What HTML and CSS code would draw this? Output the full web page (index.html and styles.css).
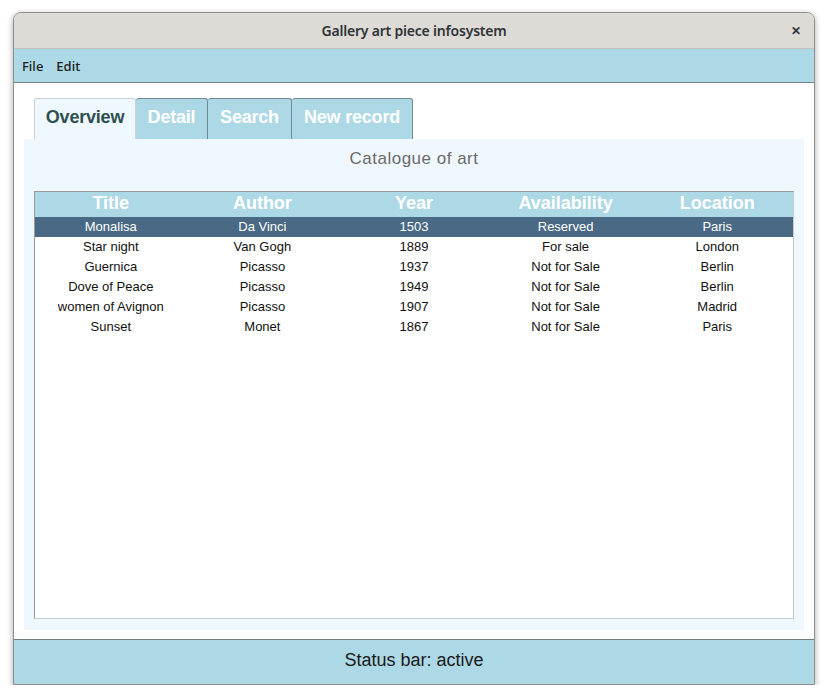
FILE: index.html
```html
<!DOCTYPE html>
<html>
<head>
<meta charset="utf-8">
<link rel="stylesheet" href="styles.css">
</head>
<body>
<div class="window">
  <div class="titlebar">
    <span class="title">Gallery art piece infosystem</span>
    <span class="close">&#x2715;</span>
  </div>
  <div class="menubar">
    <span class="menu-item">File</span>
    <span class="menu-item">Edit</span>
  </div>
  <div class="content">
    <div class="tabs">
      <div class="tab active">Overview</div>
      <div class="tab">Detail</div>
      <div class="tab">Search</div>
      <div class="tab">New record</div>
    </div>
    <div class="panel">
      <div class="panel-title">Catalogue of art</div>
      <div class="table-box">
        <table class="grid">
          <thead>
            <tr><th>Title</th><th>Author</th><th>Year</th><th>Availability</th><th>Location</th></tr>
          </thead>
          <tbody>
            <tr class="selected"><td>Monalisa</td><td>Da Vinci</td><td>1503</td><td>Reserved</td><td>Paris</td></tr>
            <tr><td>Star night</td><td>Van Gogh</td><td>1889</td><td>For sale</td><td>London</td></tr>
            <tr><td>Guernica</td><td>Picasso</td><td>1937</td><td>Not for Sale</td><td>Berlin</td></tr>
            <tr><td>Dove of Peace</td><td>Picasso</td><td>1949</td><td>Not for Sale</td><td>Berlin</td></tr>
            <tr><td>women of Avignon</td><td>Picasso</td><td>1907</td><td>Not for Sale</td><td>Madrid</td></tr>
            <tr><td>Sunset</td><td>Monet</td><td>1867</td><td>Not for Sale</td><td>Paris</td></tr>
          </tbody>
        </table>
      </div>
    </div>
  </div>
  <div class="statusbar">Status bar: active</div>
</div>
</body>
</html>
```
FILE: styles.css
```css
html, body {
  margin: 0;
  padding: 0;
  background: #ffffff;
}
body {
  padding: 12px 13px 0 13px;
  font-family: "Liberation Sans", Arial, sans-serif;
}
.window {
  width: 802px;
  height: 673px;
  box-sizing: border-box;
  border: 1px solid #8f8f8f;
  border-radius: 8px 8px 0 0;
  display: flex;
  flex-direction: column;
  box-shadow: 0 2px 6px rgba(0,0,0,0.35);
  overflow: hidden;
  background: #ffffff;
}
.titlebar {
  height: 35px;
  background: #dedad6;
  border-bottom: 1px solid #c6c2be;
  display: flex;
  align-items: center;
  justify-content: center;
  position: relative;
  font-family: "Noto Sans", sans-serif;
  color: #2e3436;
}
.title {
  font-size: 14px;
  font-weight: 600;
  letter-spacing: -0.2px;
}
.close {
  position: absolute;
  right: 13px;
  top: 9px;
  font-size: 12px;
  font-weight: 700;
}
.menubar {
  height: 33px;
  background: #add8e6;
  border-bottom: 1px solid #6e8088;
  display: flex;
  align-items: center;
  padding-left: 8px;
  gap: 13px;
  font-family: "Noto Sans", sans-serif;
  font-size: 13px;
  font-weight: 500;
  color: #1d1d1d;
}
.content {
  flex: 1;
  padding: 15px 10px 9px 10px;
  display: flex;
  flex-direction: column;
}
.tabs {
  display: flex;
  margin-left: 10px;
  height: 41px;
}
.tab {
  box-sizing: border-box;
  height: 41px;
  padding: 0 0 3px 0;
  display: flex;
  align-items: center;
  justify-content: center;
  white-space: nowrap;
  font-size: 18px;
  font-weight: 700;
  letter-spacing: -0.2px;
  color: #ffffff;
  background: #add8e6;
  border: 1px solid #6f8a91;
  border-bottom: none;
  border-left: none;
  border-radius: 3px 3px 0 0;
}
.tab.active {
  background: #f0f8ff;
  color: #2f4f4f;
  border: 1px solid #c9d2d6;
  border-bottom: none;
  width: 102px;
}
.tabs .tab:nth-child(2) { width: 72px; }
.tabs .tab:nth-child(3) { width: 84px; }
.tabs .tab:nth-child(4) { width: 121px; }
.panel {
  flex: 1;
  background: #f0f8ff;
  padding: 0 10px 11px 10px;
  display: flex;
  flex-direction: column;
}
.panel-title {
  height: 52px;
  box-sizing: border-box;
  padding-top: 10px;
  text-align: center;
  font-size: 17px;
  color: #6a6a6a;
  letter-spacing: 0.5px;
}
.table-box {
  flex: 1;
  background: #ffffff;
  border: 1px solid #c8cccf;
  border-top: 1px solid #9a9a9a;
  border-left: 1px solid #9a9a9a;
}
.grid {
  width: 100%;
  border-collapse: collapse;
  table-layout: fixed;
}
.grid th {
  height: 25px;
  padding: 0 0 2px 0;
  box-sizing: border-box;
  background: #add8e6;
  color: #ffffff;
  font-size: 18px;
  font-weight: 700;
  text-align: center;
}
.grid td {
  height: 20px;
  padding: 0 0 1px 0;
  box-sizing: border-box;
  text-align: center;
  font-size: 13px;
  color: #111111;
}
.grid tr.selected td {
  background: #4a6984;
  color: #ffffff;
}
.statusbar {
  height: 45px;
  box-sizing: border-box;
  padding-bottom: 4px;
  background: #add8e6;
  border-top: 1px solid #6e7c82;
  display: flex;
  align-items: center;
  justify-content: center;
  font-size: 18px;
  color: #1a1a1a;
}
```
